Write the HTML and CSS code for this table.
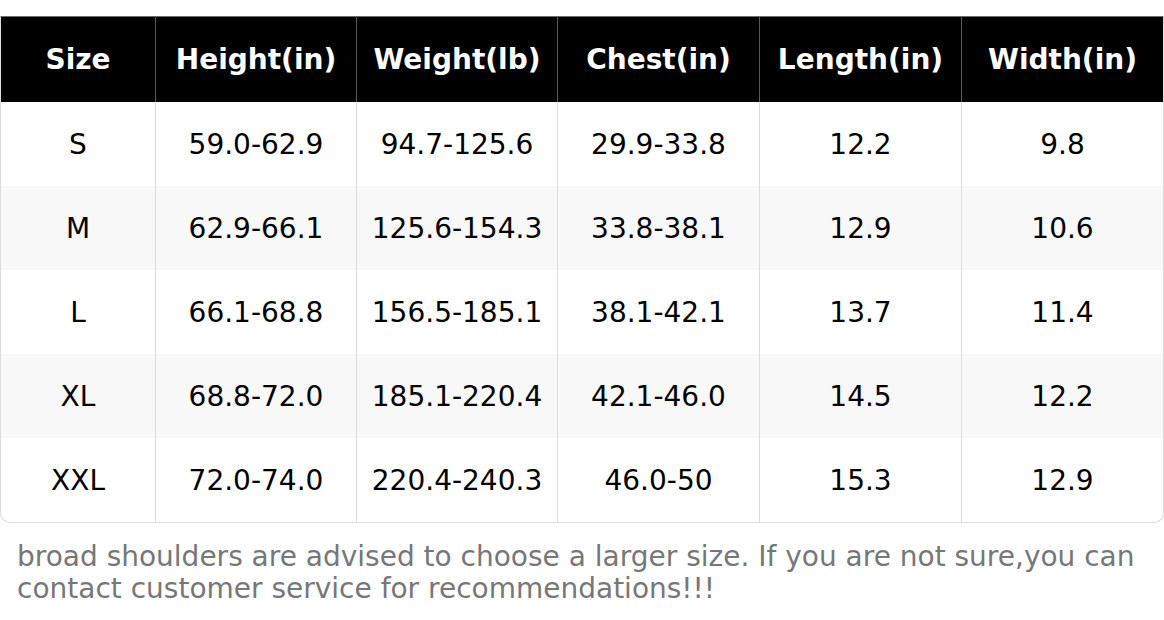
FILE: index.html
```html
<!DOCTYPE html>
<html>
<head>
<meta charset="utf-8">
<link rel="stylesheet" href="styles.css">
</head>
<body>
<div class="page">
  <table class="size-table">
    <colgroup>
      <col class="c-size"><col class="c-a"><col class="c-a"><col class="c-b"><col class="c-b"><col class="c-b">
    </colgroup>
    <thead>
      <tr><th>Size</th><th>Height(in)</th><th>Weight(lb)</th><th>Chest(in)</th><th>Length(in)</th><th>Width(in)</th></tr>
    </thead>
    <tbody>
      <tr><td>S</td><td>59.0-62.9</td><td>94.7-125.6</td><td>29.9-33.8</td><td>12.2</td><td>9.8</td></tr>
      <tr><td>M</td><td>62.9-66.1</td><td>125.6-154.3</td><td>33.8-38.1</td><td>12.9</td><td>10.6</td></tr>
      <tr><td>L</td><td>66.1-68.8</td><td>156.5-185.1</td><td>38.1-42.1</td><td>13.7</td><td>11.4</td></tr>
      <tr><td>XL</td><td>68.8-72.0</td><td>185.1-220.4</td><td>42.1-46.0</td><td>14.5</td><td>12.2</td></tr>
      <tr><td>XXL</td><td>72.0-74.0</td><td>220.4-240.3</td><td>46.0-50</td><td>15.3</td><td>12.9</td></tr>
    </tbody>
  </table>
  <p class="note">broad shoulders are advised to choose a larger size. If you are not sure,you can contact customer service for recommendations!!!</p>
</div>
</body>
</html>
```

FILE: styles.css
```css
html, body {
  margin: 0;
  padding: 0;
  background: #fff;
}
body {
  font-family: "DejaVu Sans", sans-serif;
}
.page {
  padding-top: 16px;
}
.size-table {
  width: 1164px;
  table-layout: fixed;
  border-collapse: separate;
  border-spacing: 0;
  border: 1px solid #dcdcdc;
  border-top-color: #6a6a6a;
  border-radius: 0 0 10px 10px;
  overflow: hidden;
  font-size: 28px;
}
.c-size { width: 154px; }
.c-a { width: 201px; }
.c-b { width: 202px; }
.size-table th {
  background: #000;
  color: #fff;
  font-weight: bold;
  height: 85px;
  padding: 0;
  text-align: center;
  border-left: 1px solid #5a5a5a;
}
.size-table th:first-child,
.size-table td:first-child {
  border-left: none;
}
.size-table td {
  height: 84px;
  padding: 0;
  text-align: center;
  color: #000;
  border-left: 1px solid #dcdcdc;
}
.size-table tbody tr:nth-child(even) td {
  background: #f8f8f8;
}
.note {
  margin: 18px 0 0;
  padding: 0 17px;
  font-size: 28px;
  line-height: 32px;
  color: #777;
}
```
